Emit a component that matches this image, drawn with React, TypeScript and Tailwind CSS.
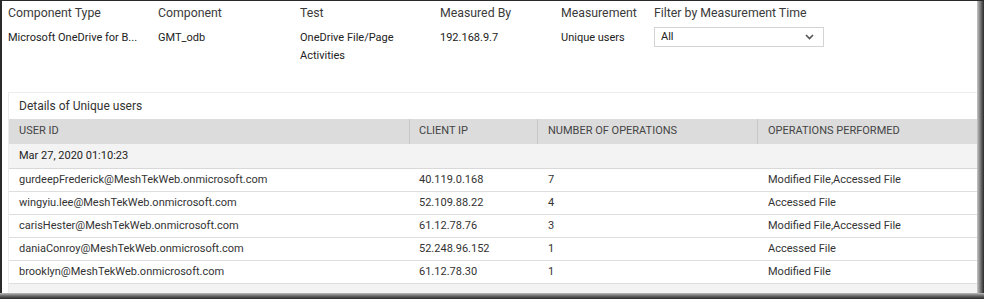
import React from 'react';

const meta = [
  { label: 'Component Type', value: 'Microsoft OneDrive for B...', w: 'w-[150px]' },
  { label: 'Component', value: 'GMT_odb', w: 'w-[142px]' },
  { label: 'Test', value: 'OneDrive File/Page Activities', w: 'w-[140px]' },
  { label: 'Measured By', value: '192.168.9.7', w: 'w-[121px]' },
  { label: 'Measurement', value: 'Unique users', w: 'w-[93px]' },
];

const rows = [
  { user: 'gurdeepFrederick@MeshTekWeb.onmicrosoft.com', ip: '40.119.0.168', count: '7', ops: 'Modified File,Accessed File' },
  { user: 'wingyiu.lee@MeshTekWeb.onmicrosoft.com', ip: '52.109.88.22', count: '4', ops: 'Accessed File' },
  { user: 'carisHester@MeshTekWeb.onmicrosoft.com', ip: '61.12.78.76', count: '3', ops: 'Modified File,Accessed File' },
  { user: 'daniaConroy@MeshTekWeb.onmicrosoft.com', ip: '52.248.96.152', count: '1', ops: 'Accessed File' },
  { user: 'brooklyn@MeshTekWeb.onmicrosoft.com', ip: '61.12.78.30', count: '1', ops: 'Modified File' },
];

const cols = 'grid grid-cols-[401px_128px_220px_1fr]';

const App: React.FC = () => {
  return (
    <div className="w-[984px] h-[299px] flex flex-col bg-[#2a2a2a] font-['Roboto',sans-serif] overflow-hidden">
      <div className="flex flex-1 min-h-0 pl-[2px] pt-[1px]">
        <div className="flex-1 bg-white flex flex-col">
          {/* summary */}
          <div className="flex pl-[6px] pt-[4px] h-[91px]">
            {meta.map((m) => (
              <div key={m.label} className={`${m.w} shrink-0`}>
                <div className="text-[12.3px] leading-[17px] text-[#3a3a3a]">{m.label}</div>
                <div className="mt-[7px] text-[11px] leading-[18px] text-[#222] pr-3">{m.value}</div>
              </div>
            ))}
            <div className="flex-1">
              <div className="text-[12.3px] leading-[17px] text-[#3a3a3a]">Filter by Measurement Time</div>
              <div className="mt-[5px] w-[170px] h-[20px] border border-[#d4d4d4] flex items-center justify-between pl-[6px] pr-[9px] text-[11px] text-[#222]">
                <span>All</span>
                <svg width="9" height="6" viewBox="0 0 9 6" fill="none">
                  <path d="M1 1l3.5 3.5L8 1" stroke="#555" strokeWidth="1.6" />
                </svg>
              </div>
            </div>
          </div>

          {/* details */}
          <div className="flex-1 ml-[6px] border-t border-l border-[#ececec] flex flex-col">
            <div className="h-[26px] flex items-center pl-[10px] text-[12px] text-[#333]">Details of Unique users</div>
            <div className={`${cols} h-[25px] bg-[#dcdcdc] text-[11px] text-[#444]`}>
              <div className="flex items-center pl-[10px] border-r border-[#c8c8c8]">USER ID</div>
              <div className="flex items-center pl-[9px] border-r border-[#c8c8c8]">CLIENT IP</div>
              <div className="flex items-center pl-[10px] border-r border-[#c8c8c8]">NUMBER OF OPERATIONS</div>
              <div className="flex items-center pl-[10px]">OPERATIONS PERFORMED</div>
            </div>
            <div className="h-[25px] bg-[#f3f3f3] flex items-center pl-[10px] text-[11px] text-[#222] border-b border-[#d8d8d8]">
              Mar 27, 2020 01:10:23
            </div>
            {rows.map((r) => (
              <div key={r.user} className={`${cols} h-[23px] text-[11px] text-[#333] border-b border-[#dedede]`}>
                <div className="flex items-center pl-[10px]">{r.user}</div>
                <div className="flex items-center pl-[9px]">{r.ip}</div>
                <div className="flex items-center pl-[10px]">{r.count}</div>
                <div className="flex items-center pl-[10px]">{r.ops}</div>
              </div>
            ))}
            <div className="flex-1 bg-[#f3f3f3]" />
          </div>
        </div>
        <div className="w-[7px] bg-gradient-to-r from-[#c8c8c8] via-[#777] to-[#2a2a2a]" />
      </div>
      <div className="h-[6px] bg-gradient-to-b from-[#bdbdbd] via-[#666] to-[#2a2a2a]" />
    </div>
  );
};

export default App;
